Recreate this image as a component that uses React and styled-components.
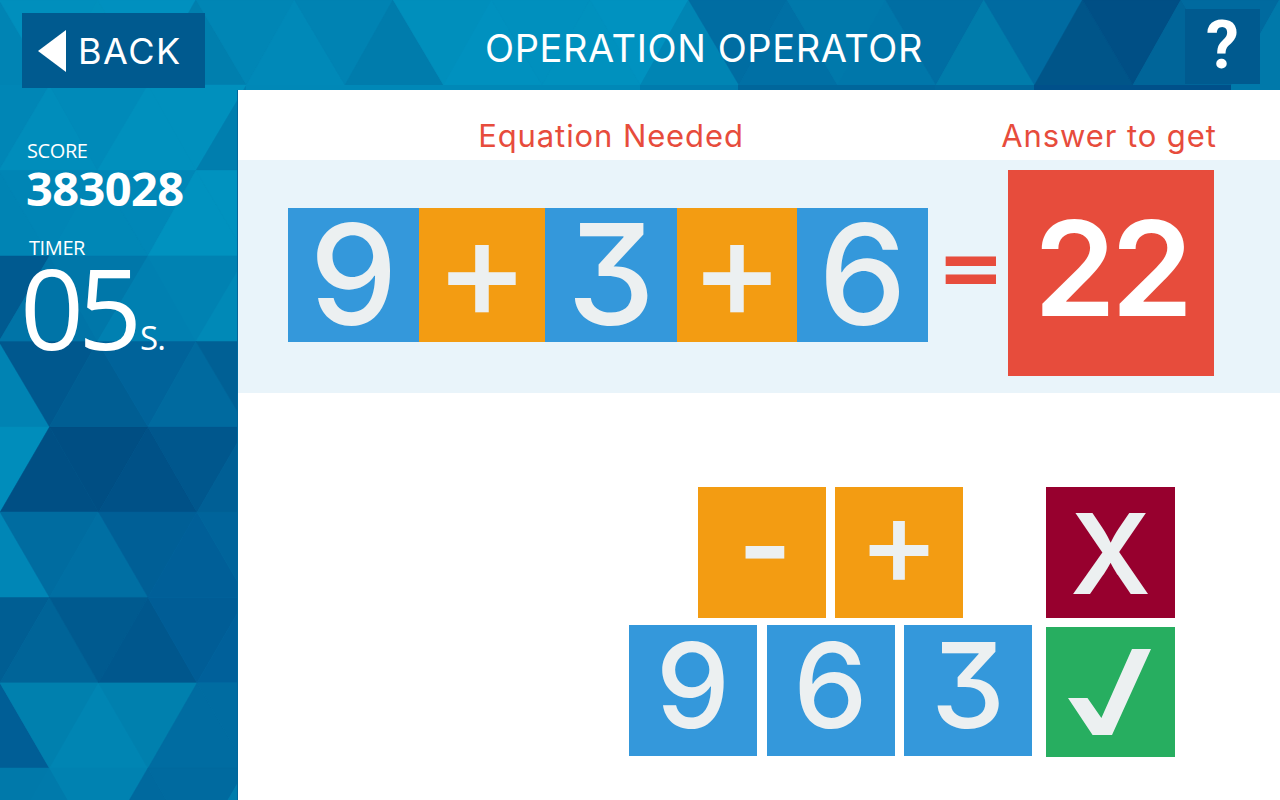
import React from 'react'

import styled, { createGlobalStyle } from 'styled-components'

const SIDE = 98.5
const ROW = 85.33

// colours are left to right, one per triangle of the strip
const HEADER_COLORS = [
  '#0084b4', '#008fbd', '#0090bd', '#0090bf', '#007fae', '#0086b5', '#0089b8', '#0083b3',
  '#007cac', '#008fbc', '#0091bf', '#0090be', '#0091be', '#0092c0', '#0085b4', '#006da2',
  '#0070a5', '#0079ab', '#0077aa', '#006ea3', '#007cab', '#006ba1', '#005589', '#004f85',
  '#006599', '#006a9f', '#0079aa', '#0079aa',
]

const SIDE_ROWS = [
  { y: 85, top: 49.5, bottom: -1, colors: ['#0086b6', '#008dbb', '#008ab9', '#0090bd', '#0090bd', '#007eae'] },
  { y: 170.5, top: -1, bottom: 49.5, colors: ['#0084b4', '#0085b5', '#0087b6', '#0087b7', '#0092bf', '#0092bf'] },
  { y: 256, top: 49.5, bottom: -1, colors: ['#005a90', '#0074a7', '#0077a9', '#0080b1', '#0082b2', '#0089b7'] },
  { y: 341.5, top: -1, bottom: 49.5, colors: ['#0083b3', '#00588e', '#005e93', '#00639a', '#006a9f', '#006095'] },
  { y: 427, top: 49.5, bottom: 0, colors: ['#008dbb', '#004f84', '#004e83', '#005187', '#00578d', '#005f95'] },
  { y: 512, top: 0, bottom: 49.5, colors: ['#0086b6', '#006ca0', '#006fa3', '#005f96', '#005f98', '#00649b'] },
  { y: 597.5, top: 49.5, bottom: 0, colors: ['#005e93', '#006498', '#005a8f', '#00578d', '#005d96', '#00609a'] },
  { y: 683, top: 0, bottom: 49.5, colors: ['#005e96', '#0080ae', '#0085b3', '#0080ae', '#006ca1', '#006ca1'] },
  { y: 768, top: 49.5, bottom: 0, colors: ['#0079aa', '#007aab', '#0082b1', '#00699e', '#006a9f', '#007cac'] },
]

function stripTriangles({ y, top, bottom, colors }) {
  // start one cell to the left of the edge, then walk up and down along the strip
  const height = ROW
  const startsDown = top > bottom
  return colors.map((color, i) => {
    const n = Math.floor(i / 2)
    let points
    if (startsDown) {
      points = i % 2 === 0
        ? [[top + (n - 1) * SIDE, y], [top + n * SIDE, y], [bottom + n * SIDE, y + height]]
        : [[top + n * SIDE, y], [bottom + n * SIDE, y + height], [bottom + (n + 1) * SIDE, y + height]]
    } else {
      points = i % 2 === 0
        ? [[top + n * SIDE, y], [bottom + (n - 1) * SIDE, y + height], [bottom + n * SIDE, y + height]]
        : [[top + n * SIDE, y], [top + (n + 1) * SIDE, y], [bottom + n * SIDE, y + height]]
    }
    return { color, points: points.map(p => p.join(',')).join(' ') }
  })
}

const backdropTriangles = [
  ...stripTriangles({ y: -0.33, top: -1, bottom: 49.5, colors: HEADER_COLORS }),
  ...SIDE_ROWS.flatMap(stripTriangles),
]

function Backdrop() {
  return (
    <BackdropSvg viewBox='0 0 1280 800' aria-hidden='true'>
      <rect width='1280' height='800' fill='#0088b7' />
      {backdropTriangles.map((t, i) => (
        <polygon key={i} points={t.points} fill={t.color} stroke={t.color} strokeWidth='0.5' />
      ))}
      <rect x='246' y='85' width='394' height='6' fill='#0088b7' />
      <rect x='640' y='85' width='98' height='6' fill='#007bad' />
      <rect x='738' y='85' width='197' height='6' fill='#00669b' />
      <rect x='935' y='85' width='99' height='6' fill='#00689d' />
      <rect x='1034' y='85' width='197' height='6' fill='#00508a' />
      <rect x='1231' y='85' width='49' height='6' fill='#0079aa' />
    </BackdropSvg>
  )
}

function App() {
  return (
    <Page>
      <GlobalStyle />
      <Backdrop />
      <Header>
        <BackButton>
          <svg width='28' height='42' viewBox='0 0 28 42'>
            <path d='M28 0V42L0 21Z' fill='#fff' />
          </svg>
          <BackLabel>BACK</BackLabel>
        </BackButton>
        <Title>OPERATION OPERATOR</Title>
        <HelpButton>?</HelpButton>
      </Header>
      <Body>
        <Sidebar>
          <StatLabel>SCORE</StatLabel>
          <Score>383028</Score>
          <StatLabel $timer>TIMER</StatLabel>
          <Timer>05<TimerUnit>S.</TimerUnit></Timer>
        </Sidebar>
        <Main>
          <Labels>
            <Label $width={746}>Equation Needed</Label>
            <Label $width={250}>Answer to get</Label>
          </Labels>
          <Band>
            <Equation>
              <EquationTile $tone='#3498db' $width={131}>9</EquationTile>
              <EquationTile $tone='#f39c12' $width={126} $op>+</EquationTile>
              <EquationTile $tone='#3498db' $width={132}>3</EquationTile>
              <EquationTile $tone='#f39c12' $width={120} $op>+</EquationTile>
              <EquationTile $tone='#3498db' $width={131}>6</EquationTile>
            </Equation>
            <EqualSign>=</EqualSign>
            <Answer>22</Answer>
          </Band>
          <Tray>
            <PickColumn>
              <OperatorRow>
                <PickTile $tone='#f39c12' $minus>-</PickTile>
                <PickTile $tone='#f39c12' $op>+</PickTile>
              </OperatorRow>
              <NumberRow>
                <PickTile $tone='#3498db'>9</PickTile>
                <PickTile $tone='#3498db'>6</PickTile>
                <PickTile $tone='#3498db'>3</PickTile>
              </NumberRow>
            </PickColumn>
            <ActionColumn>
              <ActionTile $tone='#97002e' $height={131}>X</ActionTile>
              <ActionTile $tone='#27ae60' $height={130}>
                <svg width='129' height='130' viewBox='0 0 129 130'>
                  <path d='M22 71H41.5L55.4 91L86 22H105L66 108H46.6Z' fill='#ecf0f1' />
                </svg>
              </ActionTile>
            </ActionColumn>
          </Tray>
        </Main>
      </Body>
    </Page>
  )
}

const GlobalStyle = createGlobalStyle`
  html, body {
    margin: 0;
    padding: 0;
    background: #fff;
    overflow: hidden;
  }
`;

const Page = styled.div`
  position: relative;
  width: 1280px;
  height: 800px;
  overflow: hidden;
  font-family: Inter, "Liberation Sans", sans-serif;
  font-feature-settings: "cv09";
`;

const BackdropSvg = styled.svg`
  position: absolute;
  top: 0;
  left: 0;
  width: 1280px;
  height: 800px;
`;

const Header = styled.header`
  position: relative;
  display: flex;
  align-items: flex-start;
  height: 90px;
  padding: 0 20px 0 22px;
  box-sizing: border-box;
`;

const BackButton = styled.div`
  display: flex;
  align-items: center;
  gap: 12px;
  width: 183px;
  height: 75px;
  margin-top: 13px;
  padding-left: 16px;
  box-sizing: border-box;
  background: #005a8f;
`;

const BackLabel = styled.span`
  color: #fff;
  font-size: 36px;
  font-weight: 400;
  letter-spacing: 1.5px;
  line-height: 1;
`;

const Title = styled.h1`
  flex: 1;
  margin: 0;
  padding-left: 18px;
  color: #fff;
  font-size: 38px;
  font-weight: 400;
  letter-spacing: 0.6px;
  line-height: 96px;
  text-align: center;
`;

const HelpButton = styled.div`
  width: 75px;
  height: 75px;
  margin-top: 9px;
  background: #005a8f;
  color: #fff;
  font-family: Roboto, "Liberation Sans", sans-serif;
  font-size: 66px;
  font-weight: 700;
  line-height: 74px;
  text-align: center;
`;

const Body = styled.div`
  position: relative;
  display: flex;
  height: 710px;
`;

const Sidebar = styled.aside`
  display: flex;
  flex-direction: column;
  width: 238px;
  padding-top: 49px;
  box-sizing: border-box;
  color: #fff;
  font-family: "Open Sans", sans-serif;
`;

const StatLabel = styled.div`
  margin: ${p => (p.$timer ? '23px 0 0 29px' : '0 0 0 27px')};
  font-size: 20px;
  letter-spacing: -0.4px;
  line-height: 24px;
`;

const Score = styled.div`
  margin-left: 26px;
  font-size: 47px;
  font-weight: 700;
  letter-spacing: -0.6px;
  line-height: 50px;
`;

const Timer = styled.div`
  margin: -5px 0 0 20px;
  font-size: 112px;
  letter-spacing: -6px;
  line-height: 104px;
`;

const TimerUnit = styled.span`
  margin-left: 4px;
  font-size: 33px;
  letter-spacing: -1px;
`;

const Main = styled.main`
  flex: 1;
  display: flex;
  flex-direction: column;
  background: #fff;
  border-left: 1px solid #00669b;
  margin-left: -1px;
`;

const Labels = styled.div`
  display: flex;
  height: 70px;
`;

const Label = styled.div`
  width: ${p => p.$width}px;
  color: #e74c3c;
  font-size: 31px;
  font-weight: 400;
  letter-spacing: 0.9px;
  line-height: 92px;
  text-align: center;
`;

const Band = styled.div`
  display: flex;
  align-items: center;
  height: 233px;
  padding: 0 0 8px 50px;
  box-sizing: border-box;
  background: #e9f4fa;
`;

const Equation = styled.div`
  display: flex;
  margin-top: 5px;
`;

const EquationTile = styled.div`
  width: ${p => p.$width}px;
  height: 134px;
  background: ${p => p.$tone};
  color: #ecf0f1;
  font-size: 140px;
  font-weight: 500;
  line-height: ${p => (p.$op ? '120px' : '132px')};
  text-align: center;
`;

const EqualSign = styled.div`
  width: 80px;
  margin-bottom: 15px;
  padding-left: 5px;
  box-sizing: border-box;
  color: #e74c3c;
  font-size: 94px;
  font-weight: 700;
  line-height: 120px;
  text-align: center;
  transform: scale(1.1, 0.83);
`;

const Answer = styled.div`
  width: 206px;
  height: 206px;
  background: #e74c3c;
  color: #fff;
  font-size: 132px;
  font-weight: 600;
  letter-spacing: -5px;
  line-height: 197px;
  text-align: center;
`;

const Tray = styled.div`
  display: flex;
  gap: 14px;
  padding: 94px 0 0 391px;
`;

const PickColumn = styled.div`
  display: flex;
  flex-direction: column;
  gap: 7px;
`;

const OperatorRow = styled.div`
  display: flex;
  gap: 9px;
  margin-left: 69px;
`;

const NumberRow = styled.div`
  display: flex;
  gap: 9.5px;
`;

const tileFontSize = p => (p.$op ? '122px' : '118px')
const tileLineHeight = p => (p.$op ? '108px' : p.$minus ? '116px' : '121px')

const PickTile = styled.div`
  width: 128px;
  height: 131px;
  padding-left: ${p => (p.$minus ? '6px' : '0')};
  box-sizing: border-box;
  background: ${p => p.$tone};
  color: #ecf0f1;
  font-size: ${tileFontSize};
  font-weight: ${p => (p.$minus ? 600 : 500)};
  line-height: ${tileLineHeight};
  text-align: center;
`;

const ActionColumn = styled.div`
  display: flex;
  flex-direction: column;
  gap: 9px;
`;

const ActionTile = styled.div`
  display: flex;
  align-items: center;
  justify-content: center;
  width: 129px;
  height: ${p => p.$height}px;
  background: ${p => p.$tone};
  color: #ecf0f1;
  font-size: 112px;
  font-weight: 600;
`;

export default App
